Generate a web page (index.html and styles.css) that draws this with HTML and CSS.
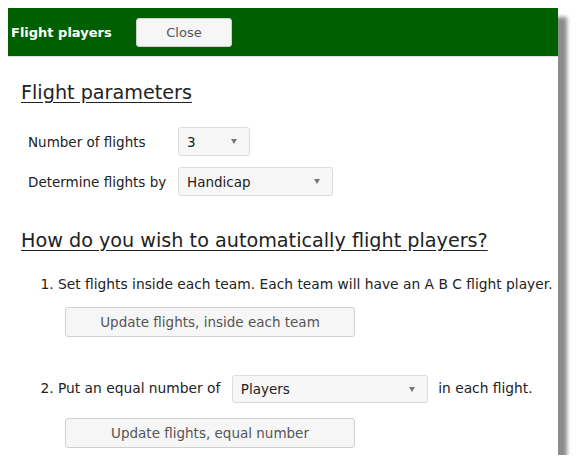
FILE: index.html
```html
<!DOCTYPE html>
<html lang="en">
<head>
    <meta charset="UTF-8">
    <title>Flight players</title>
    <link rel="stylesheet" href="styles.css">
</head>
<body>

<div class="dialog">
    <div class="titlebar">
        <span class="title">Flight players</span>
        <button class="btn btn-close" type="button">Close</button>
    </div>

    <div class="content">
        <h2>Flight parameters</h2>
        <div class="params">
            <label>Number of flights</label>
            <div class="select sel-small"><span>3</span><span class="caret"></span></div>
            <label>Determine flights by</label>
            <div class="select sel-med"><span>Handicap</span><span class="caret"></span></div>
        </div>

        <h2 class="second">How do you wish to automatically flight players?</h2>
        <ol class="methods">
            <li>
                <div class="line">Set flights inside each team. Each team will have an A B C flight player.</div>
                <button class="btn btn-update" type="button">Update flights, inside each team</button>
            </li>
            <li class="item2">
                <div class="line">Put an equal number of
                    <div class="select sel-wide"><span>Players</span><span class="caret"></span></div>
                    in each flight.</div>
                <button class="btn btn-update" type="button">Update flights, equal number</button>
            </li>
        </ol>
    </div>
</div>

</body>
</html>
```

FILE: styles.css
```css
body {
    margin: 8px;
    background-color: #fff;
    font-family: "DejaVu Sans", Verdana, sans-serif;
    color: #222;
}
.dialog {
    width: 550px;
    height: 447px;
    background-color: #fff;
    box-shadow: 9px 9px 4px #8c8c8c;
    overflow: hidden;
}
.titlebar {
    height: 48px;
    background-color: #005f00;
    border-bottom: 1px solid #d6e6d6;
    display: flex;
    align-items: center;
    padding-left: 3px;
}
.title {
    color: #fff;
    font-weight: bold;
    font-size: 13px;
    width: 125px;
    white-space: nowrap;
}
.btn {
    font-family: "DejaVu Sans", Verdana, sans-serif;
    background-color: #f6f6f6;
    border: 1px solid #d0d0d0;
    border-radius: 3px;
    color: #555;
    padding: 0;
}
.btn-close {
    width: 96px;
    height: 29px;
    font-size: 13px;
}
.content {
    padding: 0 13px;
}
h2 {
    font-size: 19.2px;
    font-weight: normal;
    text-decoration: underline;
    text-underline-offset: 3px;
    margin: 24px 0 0;
    line-height: 24px;
    white-space: nowrap;
}
h2.second {
    margin-top: 33px;
}
.params {
    display: grid;
    grid-template-columns: 150px auto;
    row-gap: 11px;
    align-items: center;
    justify-items: start;
    padding-left: 7px;
    margin-top: 22px;
    font-size: 13.5px;
}
.select {
    display: inline-flex;
    align-items: center;
    justify-content: space-between;
    box-sizing: border-box;
    height: 29px;
    padding: 0 12px 0 8px;
    background-color: #f7f7f7;
    border: 1px solid #dcdcdc;
    border-radius: 3px;
    font-size: 13.5px;
    color: #222;
    vertical-align: middle;
}
.caret {
    width: 0;
    height: 0;
    border-left: 3.5px solid transparent;
    border-right: 3.5px solid transparent;
    border-top: 5px solid #777;
}
.sel-small {
    width: 72px;
}
.sel-med {
    width: 155px;
}
.sel-wide {
    width: 196px;
    height: 28px;
    margin: 0 6px 0 7px;
}
.methods {
    margin: 21px 0 0;
    padding-left: 37px;
    font-size: 13.8px;
    white-space: nowrap;
}
.line {
    line-height: 20px;
}
.btn-update {
    display: block;
    width: 290px;
    height: 30px;
    font-size: 13.5px;
    margin: 13px 0 0 7px;
}
.item2 {
    margin-top: 38px;
}
.item2 .btn-update {
    margin-top: 15px;
}
```
